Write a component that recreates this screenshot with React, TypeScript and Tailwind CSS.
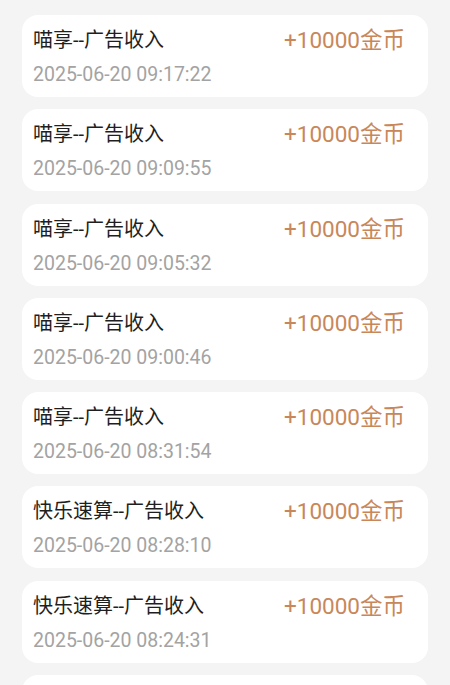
const records = [
  { title: "喵享--广告收入", time: "2025-06-20 09:17:22" },
  { title: "喵享--广告收入", time: "2025-06-20 09:09:55" },
  { title: "喵享--广告收入", time: "2025-06-20 09:05:32" },
  { title: "喵享--广告收入", time: "2025-06-20 09:00:46" },
  { title: "喵享--广告收入", time: "2025-06-20 08:31:54" },
  { title: "快乐速算--广告收入", time: "2025-06-20 08:28:10" },
  { title: "快乐速算--广告收入", time: "2025-06-20 08:24:31" },
  { title: "快乐速算--广告收入", time: "2025-06-20 08:20:07" },
];

export default function App() {
  return (
    <div className="h-[685px] overflow-hidden bg-[#f4f4f4] px-[22px] pt-[15px] font-['Roboto','Noto_Sans_CJK_SC',sans-serif]">
      <div className="flex flex-col gap-[12.3px]">
        {records.map((r, i) => (
          <div key={i} className="h-[82px] shrink-0 rounded-[16px] bg-white pl-[11px] pr-[23px] pt-[12px]">
            <div className="flex items-center justify-between">
              <span className="text-[20px] leading-[26px] text-[#1f1f1f]">{r.title}</span>
              <span className="text-[22.5px] leading-[26px] text-[#c8875a]">+10000金币</span>
            </div>
            <div className="mt-[9px] text-[19.5px] leading-[26px] text-[#a3a3a3]">{r.time}</div>
          </div>
        ))}
      </div>
    </div>
  );
}
